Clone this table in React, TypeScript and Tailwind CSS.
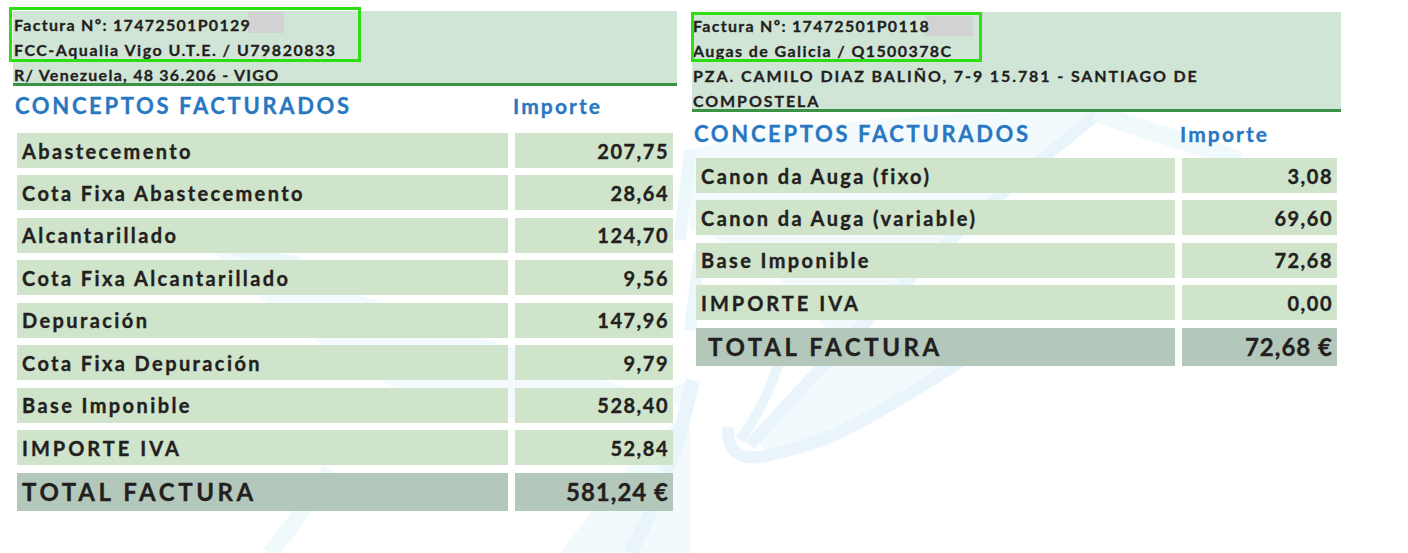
import React from "react";

type Row = { label: string; value: string; caps?: boolean };

type PanelProps = {
  width: string;
  lines: { text: string; track: string }[];
  headerH: string;
  boxClass: string;
  greyClass: string;
  titleGap: string;
  rowsGap: string;
  importeX: string;
  labelW: string;
  valueW: string;
  rows: Row[];
  total: string;
  totalPad: string;
};

const Watermark = () => (
  <svg className="absolute inset-0" width="1408" height="553" viewBox="0 0 1408 553" fill="none">
    <path d="M690 150 C 800 120, 960 110, 1110 112 C 1000 200, 880 300, 760 440 C 760 460, 790 460, 830 445 C 880 420, 930 390, 960 362 L 850 362 C 830 330, 770 250, 690 230 Z" fill="#f3fafd" />
    <path d="M1100 112 C 1000 190, 880 300, 750 445 M728 427 C 726 455, 745 462, 770 455 C 840 440, 900 400, 960 362" stroke="#e9f5fb" strokeWidth="12" strokeLinecap="butt" />
    <path d="M780 360 C 770 390, 755 420, 740 440" stroke="#e9f5fb" strokeWidth="10" />
    <path d="M1095 113 L 1240 160" stroke="#f0f9fc" strokeWidth="18" />
    <path d="M200 240 C 260 300, 330 360, 420 400 C 500 430, 600 420, 690 380 L 690 553 L 560 553 C 600 500, 640 450, 690 410" fill="#f3fafd" />
    <path d="M693 380 C 680 440, 660 500, 630 553" stroke="#e9f5fb" strokeWidth="14" />
    <path d="M330 470 C 310 500, 290 530, 270 553" stroke="#f0f9fc" strokeWidth="16" />
    <path d="M230 250 C 250 255, 280 258, 300 262" stroke="#ecf7fc" strokeWidth="10" />
    <path d="M690 150 L 680 240 M700 250 L 690 330" stroke="#ecf7fc" strokeWidth="12" />
  </svg>
);

const Panel = (p: PanelProps) => {
  return (
    <div className={`relative ${p.width}`}>
      <div className={`relative box-border ${p.headerH} bg-[#d0e5d6] border-b-[3px] border-[#3b9146] text-[16px] leading-[25px] font-bold text-[#231f20] [-webkit-text-stroke:0.3px_#231f20] pl-[1px] -mt-[1px] pt-[1px]`}>
        <div className={`absolute bg-[#d2d2d2] ${p.greyClass}`} />
        {p.lines.map((l, i) => (
          <div key={i} className={`relative whitespace-nowrap ${l.track}`}>{l.text}</div>
        ))}
        <div className={`absolute border-[3px] border-[#2ddf12] ${p.boxClass}`} />
      </div>
      <div className={`flex items-center ${p.titleGap} ${p.rowsGap} ml-[2px] leading-[26px] font-bold text-[#2878c1] [-webkit-text-stroke:0.3px_#2878c1]`}>
        <span className={`text-[22px] tracking-[2.65px] ${p.importeX}`}>CONCEPTOS FACTURADOS</span>
        <span className="text-[21px] tracking-[2.1px]">Importe</span>
      </div>
      <div className="ml-[4px] flex flex-col gap-[7.45px] text-[#231f20] font-bold [-webkit-text-stroke:0.35px_#231f20]">
        {p.rows.map((r) => (
          <div key={r.label} className="flex gap-[7px] h-[35px]">
            <div className={`${p.labelW} bg-[#cfe4ca] flex items-center pl-[5px] text-[20px] ${r.caps ? "tracking-[3px]" : "tracking-[2.4px]"}`}>{r.label}</div>
            <div className={`${p.valueW} bg-[#cfe4ca] flex items-center justify-end pr-[4px] text-[20px] tracking-[1.5px]`}>{r.value}</div>
          </div>
        ))}
        <div className="flex gap-[7px] h-[38px]">
          <div className={`${p.labelW} bg-[#b3c8bb] flex items-center ${p.totalPad} text-[24px] tracking-[3.6px]`}>TOTAL FACTURA</div>
          <div className={`${p.valueW} bg-[#b3c8bb] flex items-center justify-end pr-[4px] text-[24px] tracking-[1px]`}>{p.total}</div>
        </div>
      </div>
    </div>
  );
};

export default function App() {
  return (
    <div className="relative w-[1408px] h-[553px] bg-white overflow-hidden font-['Lato',sans-serif]">
      <Watermark />
      <div className="relative flex items-start gap-[15px] pl-[13px] pt-[12px]">
        <Panel
          width="w-[664px]"
          lines={[
            { text: "Factura Nº: 17472501P0129", track: "tracking-[1.3px]" },
            { text: "FCC-Aqualia Vigo U.T.E. / U79820833", track: "tracking-[1.5px]" },
            { text: "R/ Venezuela, 48 36.206 - VIGO", track: "tracking-[1.25px]" },
          ]}
          headerH="h-[75px]"
          boxClass="-left-[4px] -top-[4px] w-[352px] h-[55px]"
          greyClass="left-[235px] top-[1px] w-[36px] h-[21px]"
          titleGap="mt-[7px]"
          rowsGap="mb-[14px]"
          importeX="w-[498px]"
          labelW="w-[491px]"
          valueW="w-[158px]"
          rows={[
            { label: "Abastecemento", value: "207,75" },
            { label: "Cota Fixa Abastecemento", value: "28,64" },
            { label: "Alcantarillado", value: "124,70" },
            { label: "Cota Fixa Alcantarillado", value: "9,56" },
            { label: "Depuración", value: "147,96" },
            { label: "Cota Fixa Depuración", value: "9,79" },
            { label: "Base Imponible", value: "528,40" },
            { label: "IMPORTE IVA", value: "52,84", caps: true },
          ]}
          total="581,24 €"
          totalPad="pl-[5px]"
        />
        <div className="mt-[1px]">
          <Panel
            width="w-[649px]"
            lines={[
              { text: "Factura Nº: 17472501P0118", track: "tracking-[1.3px]" },
              { text: "Augas de Galicia / Q1500378C", track: "tracking-[1.4px]" },
              { text: "PZA. CAMILO DIAZ BALIÑO, 7-9 15.781 - SANTIAGO DE", track: "tracking-[1.9px]" },
              { text: "COMPOSTELA", track: "tracking-[1.9px]" },
            ]}
            headerH="h-[100px]"
            boxClass="-left-[1px] top-0 w-[291px] h-[50px]"
            greyClass="left-[233px] top-[4px] w-[48px] h-[20px]"
            titleGap="mt-[9px]"
            rowsGap="mb-[11px]"
            importeX="w-[486px]"
            labelW="w-[479px]"
            valueW="w-[155px]"
            rows={[
              { label: "Canon da Auga (fixo)", value: "3,08" },
              { label: "Canon da Auga (variable)", value: "69,60" },
              { label: "Base Imponible", value: "72,68" },
              { label: "IMPORTE IVA", value: "0,00", caps: true },
            ]}
            total="72,68 €"
            totalPad="pl-[12px]"
          />
        </div>
      </div>
    </div>
  );
}
